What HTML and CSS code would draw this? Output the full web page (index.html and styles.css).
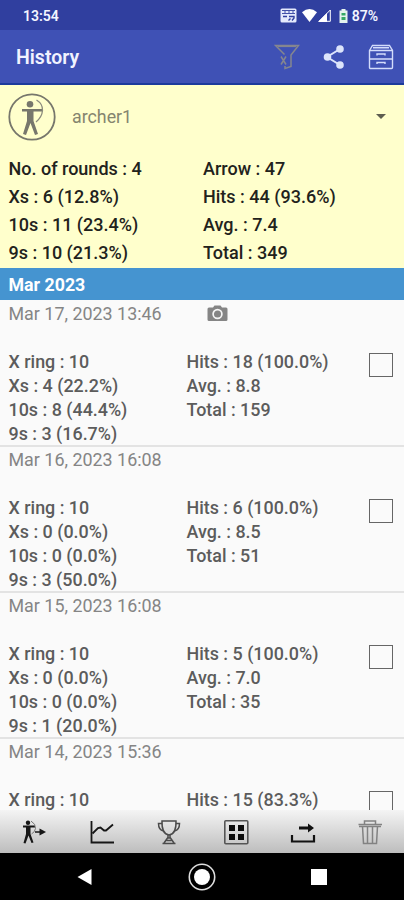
FILE: index.html
```html
<!DOCTYPE html>
<html lang="en">
<head>
  <meta charset="UTF-8" />
  <title>History</title>
  <link rel="stylesheet" href="styles.css">
</head>
<body>
  <div class="screen">
    <!-- Status bar -->
    <div class="status-bar">
      <span>13:54</span>
      <div class="status-icons">
        <svg class="icon-event" width="17" height="15" viewBox="0 0 17 15">
          <rect x="0.5" y="0.5" width="16" height="14" rx="1.5" fill="#e4e9fc" />
          <path d="M2 2.5h13M2 5.5h13M4 4h2M8 4h2M12 4h2" stroke="#303f9f" stroke-width="0.9" />
          <path d="M3 8.5h4M9 8.5h5v1.5l-2 2.5M8.500 12.500l2-2" fill="none" stroke="#303f9f" stroke-width="1.4" />
        </svg>
        <svg class="icon-wifi" width="15" height="13" viewBox="0 0 14 12">
          <path d="M0 3Q7 -3 14 3L7 12Z" fill="#fff" />
        </svg>
        <svg class="icon-signal" width="13" height="13" viewBox="0 0 13 13">
          <path d="M1 12.300L12.300 1V12.300Z" fill="none" stroke="#fff" />
          <path d="M0 13L9 4V13Z" fill="#fff" />
        </svg>
        <svg class="icon-battery" width="9" height="14" viewBox="0 0 9 14">
          <path d="M2.500 0h4v1.500H8.500V14H0.500V1.500h2z" fill="#e4f3ee" />
          <path d="M2.500 4h4v2.500H2.500zM2.500 8h4v3H2.500z" fill="#35a866" />
        </svg>
        <span>87%</span>
      </div>
    </div>

    <!-- App bar -->
    <div class="app-bar">
      <h1>History</h1>
      <div class="app-actions">
        <svg width="26" height="26" viewBox="0 0 26 26" fill="none" stroke="#85868f" stroke-width="1.5">
          <path d="M10.500 10.500L1.500 1.500H24.500L17 11V22.500L11 24.500V22" />
          <path d="M4 2.500h18" stroke-width="1.200" />
          <path d="M7 12.500l5 8M12 12.500l-5 8" />
        </svg>
        <svg width="22" height="24" viewBox="0 0 22 24" fill="#dce4fb">
          <path d="M17 4L4 12L17 20" fill="none" stroke="#dce4fb" stroke-width="2" />
          <circle cx="17" cy="4" r="3.800" />
          <circle cx="4.500" cy="12" r="3.800" />
          <circle cx="17" cy="20" r="3.800" />
        </svg>
        <svg width="26" height="26" viewBox="0 0 26 26" fill="none" stroke="#d3dcfb" stroke-width="1.400">
          <path d="M1.500 6.500L4.500 1.500H21.500L24.500 6.500V23.500a1 1 0 0 1-1 1H2.500a1 1 0 0 1-1-1Z" />
          <path d="M1.500 6.500h23M2 15h22M5 3.800h16" />
          <path d="M9 11.500V10h8v1.500M9 20V18.500h8V20" />
        </svg>
      </div>
    </div>

    <!-- Archer and totals -->
    <div class="summary">
      <div class="archer">
        <svg width="48" height="48" viewBox="0 0 48 48">
          <circle cx="24" cy="24" r="22.700" fill="none" stroke="#77776c" stroke-width="1.800" />
          <g fill="#77776c">
            <circle cx="22" cy="11.300" r="3.300" />
            <path d="M14 16h20v2.500h-8.500V28l4.500 13-3 1L22.500 30 18 42l-3-1L19 28v-9.500h-5z" />
          </g>
          <path d="M28.500 7Q35 11 34.500 17.500Q34 24 28 29" fill="none" stroke="#8b8b7c" stroke-width="1.300" />
        </svg>
        <span class="archer-name">archer1</span>
        <span class="arrow-down"></span>
      </div>
      <div class="totals">
        <div>No. of rounds : 4</div><div>Arrow : 47</div>
        <div>Xs : 6 (12.8%)</div><div>Hits : 44 (93.6%)</div>
        <div>10s : 11 (23.4%)</div><div>Avg. : 7.4</div>
        <div>9s : 10 (21.3%)</div><div>Total : 349</div>
      </div>
    </div>

    <div class="month">Mar 2023</div>

    <!-- Rounds -->
    <div class="rounds">
      <div class="round">
        <div class="round-date">
          <span>Mar 17, 2023 13:46</span>
          <svg width="21" height="17" viewBox="0 0 21 17">
            <path d="M2 2.500h4L7.500 0.500h6L15 2.500h4a1.500 1.500 0 0 1 1.500 1.500v10.500a1.500 1.500 0 0 1-1.500 1.500H2a1.500 1.500 0 0 1-1.500-1.500V4A1.500 1.500 0 0 1 2 2.500z" fill="#858585" />
            <circle cx="10.500" cy="9" r="4.400" fill="#858585" stroke="#f5f5f5" stroke-width="1.700" />
          </svg>
        </div>
        <div class="round-stats">
          <div>X ring : 10<br>Xs : 4 (22.2%)<br>10s : 8 (44.4%)<br>9s : 3 (16.7%)</div>
          <div>Hits : 18 (100.0%)<br>Avg. : 8.8<br>Total : 159</div>
          <span class="check"></span>
        </div>
      </div>

      <div class="round">
        <div class="round-date"><span>Mar 16, 2023 16:08</span></div>
        <div class="round-stats">
          <div>X ring : 10<br>Xs : 0 (0.0%)<br>10s : 0 (0.0%)<br>9s : 3 (50.0%)</div>
          <div>Hits : 6 (100.0%)<br>Avg. : 8.5<br>Total : 51</div>
          <span class="check"></span>
        </div>
      </div>

      <div class="round">
        <div class="round-date"><span>Mar 15, 2023 16:08</span></div>
        <div class="round-stats">
          <div>X ring : 10<br>Xs : 0 (0.0%)<br>10s : 0 (0.0%)<br>9s : 1 (20.0%)</div>
          <div>Hits : 5 (100.0%)<br>Avg. : 7.0<br>Total : 35</div>
          <span class="check"></span>
        </div>
      </div>

      <div class="round">
        <div class="round-date"><span>Mar 14, 2023 15:36</span></div>
        <div class="round-stats">
          <div>X ring : 10</div>
          <div>Hits : 15 (83.3%)</div>
          <span class="check"></span>
        </div>
      </div>
    </div>

    <!-- Toolbar -->
    <div class="toolbar">
      <svg width="26" height="26" viewBox="0 0 26 26">
        <g fill="#161616">
          <circle cx="6" cy="3.800" r="2.200" />
          <path d="M1 6.500h12v2H8.500V15l3 8.500-2 .5L6.500 16.500 3.500 24.500l-2-.5L4 15V8.500H1z" />
          <path d="M17.500 9.500l6.500 3.500-6.500 3.500z" />
        </g>
        <path d="M13 13h6" stroke="#161616" stroke-width="1.500" />
        <path d="M9 2Q14 5 13.500 9.500Q13 13 9.500 15" fill="none" stroke="#777" />
      </svg>
      <svg width="26" height="26" viewBox="0 0 26 26" fill="none" stroke="#161616" stroke-width="1.800">
        <path d="M2.500 2V23.500H25" />
        <path d="M3.500 14.500L9 9l2.500-.5 3.500 3h2l7-6" />
      </svg>
      <svg width="26" height="26" viewBox="0 0 26 26" fill="none" stroke="#4b4b4b" stroke-width="1.500">
        <path d="M6 2H20Q20.500 15 13 16Q5.500 15 6 2Z" />
        <path d="M6 4.500H2.500Q2.500 11 7.500 12M20 4.500h3.500Q23.500 11 18.500 12" />
        <path d="M12 16v3M14 16v3M6.500 24.500H19.500M8 24l3.500-5h3l3.500 5M10.500 21.500h5" />
      </svg>
      <svg width="26" height="26" viewBox="0 0 26 26">
        <rect x="1.800" y="1.800" width="23" height="23" rx="1" fill="none" stroke="#555" stroke-width="1.600" />
        <path d="M6 6h6v6H6zM15 6h6v6h-6zM6 15h6v6H6zM15 15h6v6h-6z" fill="#0b0b0b" />
      </svg>
      <svg width="26" height="26" viewBox="0 0 26 26">
        <path d="M2 16v6.500H24V16" fill="none" stroke="#111" stroke-width="2.200" />
        <path d="M9 7.500h9V4.500l6 4.500-6 4.500v-3H9z" fill="#111" />
      </svg>
      <svg width="26" height="26" viewBox="0 0 26 26" fill="none" stroke="#828282" stroke-width="1.500">
        <path d="M1.500 5.500H25M7.500 5V2H18.500V5M2 7.500H24" />
        <path d="M5.500 7.500L6.500 24.500H19.500L20.500 7.500M10.500 8v16M15.500 8v16" />
      </svg>
    </div>

    <!-- System navigation -->
    <div class="nav-bar">
      <svg width="16" height="18" viewBox="0 0 16 18"><path d="M0.500 9L14.500 1V17z" fill="#fff" /></svg>
      <svg width="28" height="28" viewBox="0 0 28 28">
        <circle cx="14" cy="14" r="12.700" fill="none" stroke="#dedede" stroke-width="1.600" />
        <circle cx="14" cy="14" r="8" fill="#fff" />
      </svg>
      <svg width="16" height="16" viewBox="0 0 16 16"><path d="M0 0h16v16H0z" fill="#fff" /></svg>
    </div>
  </div>
</body>
</html>
```
FILE: styles.css
```css
* {
  box-sizing: border-box;
}

body {
  margin: 0;
  font-family: Roboto, sans-serif;
  background: #fafafa;
}

.screen {
  display: flex;
  flex-direction: column;
  width: 404px;
  height: 900px;
  overflow: hidden;
}

.status-bar {
  display: flex;
  flex: none;
  justify-content: space-between;
  align-items: center;
  height: 30px;
  padding: 1px 26px 0 23px;
  background: #303f9f;
  color: #f3f5ff;
  font-size: 14px;
  font-weight: 600;
}

.status-icons {
  display: flex;
  align-items: center;
}

.icon-wifi {
  margin-left: 5px;
}

.icon-signal {
  margin-left: 1px;
}

.icon-battery {
  margin: 0 4px 0 8px;
}

.app-bar {
  display: flex;
  flex: none;
  justify-content: space-between;
  align-items: center;
  height: 55px;
  padding: 1px 10px 0 16px;
  background: #3f51b5;
  border-bottom: 2px solid #1c3a9c;
  color: #f1f3ff;
}

.app-bar h1 {
  margin: 0;
  font-size: 19.5px;
  font-weight: 600;
}

.app-actions {
  display: flex;
  align-items: center;
  gap: 23px;
}

.summary {
  flex: none;
  height: 183px;
  background: #ffffcc;
}

.archer {
  display: flex;
  align-items: center;
  height: 63px;
  padding: 0 18px 0 8px;
}

.archer-name {
  flex: 1;
  margin-left: 16px;
  color: #85856f;
  font-size: 17.8px;
}

.arrow-down {
  border: 5px solid transparent;
  border-top-color: #5e5e50;
  border-bottom: 0;
}

.totals {
  display: grid;
  grid-template-columns: 194.5px 1fr;
  padding: 7px 0 0 8.5px;
  color: #22221c;
  font-size: 18px;
  font-weight: 500;
  line-height: 28px;
}

.month {
  flex: none;
  height: 32px;
  padding-left: 8.5px;
  background: #4594d0;
  color: #fff;
  font-size: 17.8px;
  font-weight: 700;
  line-height: 34px;
}

.rounds {
  flex: 1;
  min-height: 0;
  padding-top: 1px;
  overflow: hidden;
}

.round {
  height: 146px;
  padding-left: 8.5px;
  border-bottom: 2px solid #e3e3e3;
}

.round-date {
  display: flex;
  align-items: center;
  height: 24px;
  color: #858585;
  font-size: 17.9px;
}

.round-date svg {
  margin-left: 45px;
}

.round-stats {
  display: grid;
  grid-template-columns: 178px 182px 24px;
  margin-top: 25px;
  color: #5c5c5c;
  font-size: 17.9px;
  font-weight: 500;
  line-height: 24px;
}

.check {
  width: 24px;
  height: 24px;
  margin-top: 3px;
  border: 1.5px solid #666;
}

.toolbar {
  display: flex;
  flex: none;
  justify-content: space-around;
  align-items: center;
  height: 43px;
  padding-left: 1px;
  background: linear-gradient(#f4f4f4, #bdbdbd);
}

.nav-bar {
  display: flex;
  flex: none;
  justify-content: space-between;
  align-items: center;
  height: 47px;
  padding: 1px 77px;
  background: #000;
}
```
